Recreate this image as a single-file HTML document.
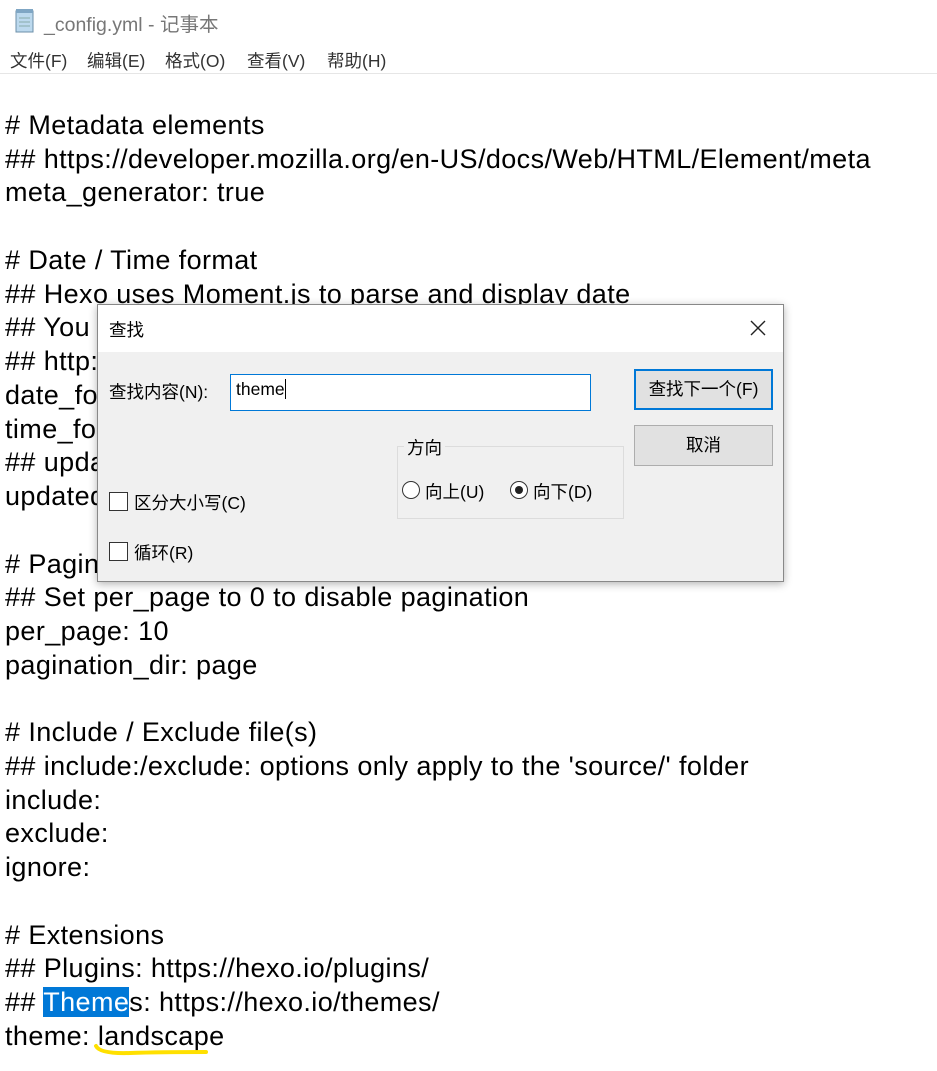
<!DOCTYPE html>
<html><head><meta charset="utf-8"><style>
*{margin:0;padding:0;box-sizing:border-box}
body{width:937px;height:1071px;background:#fff;position:relative;overflow:hidden;font-family:"Liberation Sans","Noto Sans CJK SC",sans-serif}
.t{position:absolute}
#ed{position:absolute;left:5px;top:109px;font-size:27px;letter-spacing:0.4px;line-height:33.74px;color:#000;white-space:pre}
.hl{background:#0078d7;color:#fff}
.d{font-size:17.5px;color:#000}
.m{position:absolute;top:48px;font-size:17.5px;color:#333}
.cb{position:absolute;width:19px;height:19px;border:1px solid #333;background:#fff}
.rb{position:absolute;width:18px;height:18px;border:1px solid #333;border-radius:50%;background:#fff}
</style></head><body>
<svg class="t" style="left:13px;top:8px" width="24" height="26" viewBox="0 0 24 26"><rect x="3" y="3" width="17" height="21" fill="#bcd9ee" stroke="#6c8fa8"/><rect x="3" y="1" width="17" height="4" fill="#7fa6c4"/><line x1="6" y1="10" x2="17" y2="10" stroke="#8aa"/><line x1="6" y1="14" x2="17" y2="14" stroke="#8aa"/><line x1="6" y1="18" x2="17" y2="18" stroke="#8aa"/></svg>
<div class="t" style="left:44px;top:8px;font-size:19.5px;color:#777">_config.yml - 记事本</div>
<div class="m" style="left:10px">文件(F)</div>
<div class="m" style="left:87px">编辑(E)</div>
<div class="m" style="left:165px">格式(O)</div>
<div class="m" style="left:247px">查看(V)</div>
<div class="m" style="left:327px">帮助(H)</div>
<div class="t" style="left:0;top:73px;width:937px;height:1px;background:#e6e6e6"></div>
<div id="ed"># Metadata elements
## https://developer.mozilla.org/en-US/docs/Web/HTML/Element/meta
meta_generator: true

# Date / Time format
## Hexo uses Moment.js to parse and display date
## You can customize the date format as defined in
## http://momentjs.com/docs/#/displaying/format/
date_format: YYYY-MM-DD
time_format: HH:mm:ss
## updated_option supports 'mtime', 'date', 'empty'
updated_option: 'mtime'

# Pagination
## Set per_page to 0 to disable pagination
per_page: 10
pagination_dir: page

# Include / Exclude file(s)
## include:/exclude: options only apply to the 'source/' folder
include:
exclude:
ignore:

# Extensions
## Plugins: https://hexo.io/plugins/
## <span class="hl">Theme</span>s: https://hexo.io/themes/
theme: landscape</div>
<svg class="t" style="left:90px;top:1040px" width="125" height="22"><path d="M6 6 Q10 14 40 13 T116 12" stroke="#ffe000" stroke-width="4" fill="none" stroke-linecap="round"/></svg>

<div class="t" style="left:97px;top:304px;width:687px;height:278px;background:#f0f0f0;border:1px solid #888;box-shadow:0 2px 8px rgba(0,0,0,.3)">
 <div style="position:absolute;left:0;top:0;width:685px;height:47px;background:#fff"></div>
 <div class="t d" style="left:11px;top:12px">查找</div>
 <svg class="t" style="left:651px;top:14px" width="18" height="18"><path d="M2 2L16 16M16 2L2 16" stroke="#222" stroke-width="1.4"/></svg>
 <div class="t d" style="left:11px;top:74px">查找内容(N):</div>
 <div class="t" style="left:132px;top:69px;width:361px;height:37px;background:#fff;border:1px solid #0078d7"></div>
 <div class="t d" style="left:138px;top:74px">theme<span style="display:inline-block;width:1px;height:20px;background:#000;vertical-align:-4px"></span></div>
 <div class="t d" style="left:536px;top:64px;width:139px;height:41px;background:#e1e1e1;border:2px solid #0078d7;text-align:center;line-height:37px">查找下一个(F)</div>
 <div class="t d" style="left:536px;top:120px;width:139px;height:41px;background:#e1e1e1;border:1px solid #adadad;text-align:center;line-height:39px">取消</div>
 <div class="t" style="left:299px;top:141px;width:227px;height:73px;border:1px solid #dcdcdc"></div>
 <div class="t d" style="left:306px;top:130px;background:#f0f0f0;padding:0 3px">方向</div>
 <div class="rb" style="left:304px;top:176px"></div>
 <div class="t d" style="left:327px;top:174px">向上(U)</div>
 <div class="rb" style="left:412px;top:176px"><div style="position:absolute;left:4px;top:4px;width:8px;height:8px;border-radius:50%;background:#222"></div></div>
 <div class="t d" style="left:435px;top:174px">向下(D)</div>
 <div class="cb" style="left:11px;top:187px"></div>
 <div class="t d" style="left:36px;top:185px">区分大小写(C)</div>
 <div class="cb" style="left:11px;top:237px"></div>
 <div class="t d" style="left:36px;top:235px">循环(R)</div>
</div>
</body></html>
